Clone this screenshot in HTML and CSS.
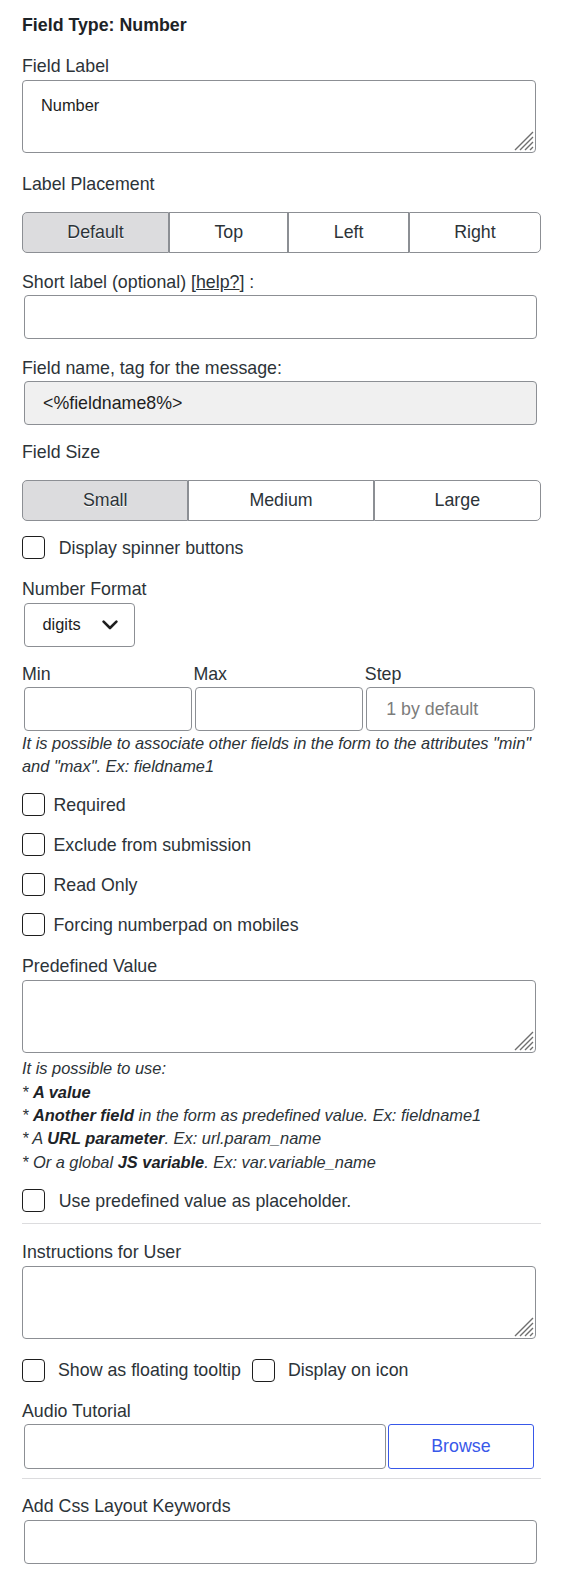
FILE: index.html
```html
<!DOCTYPE html>
<html lang="en">
<head>
<meta charset="utf-8">
<title>Field Type: Number</title>
<link rel="stylesheet" href="styles.css">
</head>
<body>
<div class="panel">
  <h3 class="title">Field Type: Number</h3>

  <div class="field field-first">
    <label class="lbl lbl-area">Field Label</label>
    <div class="area-wrap">
      <textarea class="area">Number</textarea>
      <svg class="grip" width="20" height="20" viewBox="0 0 20 20"><path d="M1 19L19 1M6 19L19 6M11 19L19 11M16 19L19 16" stroke="#6f6f6f" stroke-width="1.4" fill="none"/></svg>
    </div>
  </div>

  <div class="field field-seg1">
    <label class="lbl lbl-seg">Label Placement</label>
    <div class="seg">
      <span class="seg-btn is-active">Default</span>
      <span class="seg-btn">Top</span>
      <span class="seg-btn">Left</span>
      <span class="seg-btn">Right</span>
    </div>
  </div>

  <div class="field">
    <label class="lbl">Short label (optional) [<a class="help">help?</a>] :</label>
    <input class="txt" type="text">
  </div>

  <div class="field">
    <label class="lbl">Field name, tag for the message:</label>
    <input class="txt txt-disabled" type="text" value="<%fieldname8%>" readonly>
  </div>

  <div class="field field-seg2">
    <label class="lbl lbl-seg">Field Size</label>
    <div class="seg">
      <span class="seg-btn is-active">Small</span>
      <span class="seg-btn">Medium</span>
      <span class="seg-btn">Large</span>
    </div>
  </div>

  <label class="check check-spinner"><input class="chk" type="checkbox"><span>Display spinner buttons</span></label>

  <div class="field field-format">
    <label class="lbl">Number Format</label>
    <div class="sel">
      <span>digits</span>
      <svg class="chev" width="16" height="10" viewBox="0 0 16 10"><polyline points="1.6,1.6 8,8 14.4,1.6" fill="none" stroke="#1e1e1e" stroke-width="2.6" stroke-linecap="round" stroke-linejoin="round"/></svg>
    </div>
  </div>

  <div class="field field-range">
    <div class="range">
      <div class="range-col">
        <label class="lbl">Min</label>
        <input class="txt range-input" type="text">
      </div>
      <div class="range-col">
        <label class="lbl">Max</label>
        <input class="txt range-input" type="text">
      </div>
      <div class="range-col">
        <label class="lbl">Step</label>
        <input class="txt range-input" type="text" placeholder="1 by default">
      </div>
    </div>
    <p class="help-text help-range">It is possible to associate other fields in the form to the attributes "min" and "max". Ex: fieldname1</p>
  </div>

  <div class="check-list">
    <label class="check check-tight"><input class="chk" type="checkbox"><span>Required</span></label>
    <label class="check check-tight"><input class="chk" type="checkbox"><span>Exclude from submission</span></label>
    <label class="check check-tight"><input class="chk" type="checkbox"><span>Read Only</span></label>
    <label class="check check-tight"><input class="chk" type="checkbox"><span>Forcing numberpad on mobiles</span></label>
  </div>

  <div class="field field-predef">
    <label class="lbl lbl-area">Predefined Value</label>
    <div class="area-wrap">
      <textarea class="area"></textarea>
      <svg class="grip" width="20" height="20" viewBox="0 0 20 20"><path d="M1 19L19 1M6 19L19 6M11 19L19 11M16 19L19 16" stroke="#6f6f6f" stroke-width="1.4" fill="none"/></svg>
    </div>
    <div class="help-text help-predef">
      <div>It is possible to use:</div>
      <div>* <b>A value</b></div>
      <div>* <b>Another field</b> in the form as predefined value. Ex: fieldname1</div>
      <div>* A <b>URL parameter</b>. Ex: url.param_name</div>
      <div>* Or a global <b>JS variable</b>. Ex: var.variable_name</div>
    </div>
  </div>

  <label class="check check-placeholder"><input class="chk" type="checkbox"><span>Use predefined value as placeholder.</span></label>

  <hr class="divider divider-1">

  <div class="field field-instr">
    <label class="lbl lbl-area">Instructions for User</label>
    <div class="area-wrap">
      <textarea class="area"></textarea>
      <svg class="grip" width="20" height="20" viewBox="0 0 20 20"><path d="M1 19L19 1M6 19L19 6M11 19L19 11M16 19L19 16" stroke="#6f6f6f" stroke-width="1.4" fill="none"/></svg>
    </div>
  </div>

  <div class="check-pair">
    <label class="check"><input class="chk" type="checkbox"><span>Show as floating tooltip</span></label>
    <label class="check"><input class="chk" type="checkbox"><span>Display on icon</span></label>
  </div>

  <div class="field field-audio">
    <label class="lbl">Audio Tutorial</label>
    <div class="file-row">
      <input class="txt file-input" type="text">
      <button class="browse" type="button">Browse</button>
    </div>
  </div>

  <hr class="divider divider-2">

  <div class="field field-css">
    <label class="lbl">Add Css Layout Keywords</label>
    <input class="txt" type="text">
  </div>
</div>
</body>
</html>
```

FILE: styles.css
```css
* {
  box-sizing: border-box;
}

body {
  margin: 0;
  background: #ffffff;
  font-family: "Liberation Sans", Arial, sans-serif;
  font-size: 17.8px;
  color: #2c3338;
}

.panel {
  width: 519px;
  margin-left: 22px;
  padding-top: 14px;
  padding-bottom: 20px;
}

.title {
  margin: 0;
  font-size: 17.8px;
  font-weight: bold;
  line-height: 22px;
  color: #1d2327;
}

.field {
  margin-top: 17.5px;
}

.field-first { margin-top: 18.7px; }
.field-seg1 { margin-top: 20.6px; }
.field-seg2 { margin-top: 16px; }
.field-format { margin-top: 18.7px; }
.field-range { margin-top: 16.3px; }
.field-predef { margin-top: 18.4px; }
.field-instr { margin-top: 16.5px; }
.field-audio { margin-top: 18px; }
.field-css { margin-top: 16.6px; }

.lbl {
  display: block;
  line-height: 22px;
  margin-bottom: 2.4px;
}

.lbl-area {
  margin-bottom: 3.6px;
}

.lbl-seg {
  margin-bottom: 17px;
}

.help {
  color: #2c3338;
  text-decoration: underline;
}

.area-wrap {
  position: relative;
  width: 513.5px;
}

.area {
  display: block;
  width: 513.5px;
  height: 72.4px;
  margin: 0;
  padding: 14px 18px;
  border: 1px solid #8c8f94;
  border-radius: 4px;
  background: #ffffff;
  font-family: "Liberation Sans", Arial, sans-serif;
  font-size: 16.4px;
  line-height: 20px;
  color: #1e1e1e;
  resize: none;
}

.grip {
  position: absolute;
  right: 2px;
  bottom: 2px;
  display: block;
}

.txt {
  display: block;
  width: 512.5px;
  height: 44px;
  margin: 0 0 0 2px;
  padding: 0 18px;
  border: 1px solid #8c8f94;
  border-radius: 4px;
  background: #ffffff;
  font-family: "Liberation Sans", Arial, sans-serif;
  font-size: 17.8px;
  color: #2c3338;
  outline: none;
}

.txt::placeholder {
  color: #7c7c7c;
}

.txt-disabled {
  background: #f0f0f0;
  height: 44.4px;
  color: #1e1e1e;
}

.seg {
  display: flex;
  height: 41px;
}

.seg-btn {
  flex: 1 1 auto;
  display: flex;
  align-items: center;
  justify-content: center;
  border: 1px solid #8c8f94;
  background: #ffffff;
  font-size: 17.8px;
  color: #2c3338;
}

.seg-btn:first-child {
  border-radius: 5px 0 0 5px;
}

.seg-btn:last-child {
  border-radius: 0 5px 5px 0;
}

.seg-btn.is-active {
  background: #dcdcde;
  text-shadow: 0 1px 0 #ffffff;
}

.check {
  display: flex;
  align-items: center;
  gap: 13.7px;
  line-height: 22px;
}

.check-tight {
  gap: 8.5px;
}

.chk {
  appearance: none;
  -webkit-appearance: none;
  flex: none;
  width: 23px;
  height: 23.3px;
  margin: 0;
  border: 1px solid #1e1e1e;
  border-radius: 4px;
  background: #ffffff;
}

.check-spinner { margin-top: 14.7px; }

.check-list {
  display: flex;
  flex-direction: column;
  gap: 16.7px;
  margin-top: 15.3px;
}

.check-placeholder { margin-top: 15.2px; }

.check-pair {
  display: flex;
  gap: 11px;
  margin-top: 20px;
}

.check-pair .check {
  gap: 13px;
}

.sel {
  display: flex;
  align-items: center;
  justify-content: space-between;
  width: 111px;
  height: 44px;
  margin-left: 2px;
  padding: 0 16.5px 0 17.4px;
  border: 1px solid #8c8f94;
  border-radius: 4px;
  font-size: 16.4px;
  color: #1e1e1e;
}

.chev {
  display: block;
}

.range {
  display: grid;
  grid-template-columns: repeat(3, 171.4px);
}

.range-input {
  width: 168.5px;
  margin-left: 1.5px;
  padding: 0 19px;
}

.help-text {
  font-style: italic;
  font-size: 16.4px;
  color: #2c3338;
}

.help-text b {
  color: #1d2327;
}

.help-range {
  margin: 0.7px 0 0;
  line-height: 23px;
}

.help-predef {
  margin-top: 4.7px;
  line-height: 23.3px;
}

.divider {
  height: 0;
  margin: 0;
  border: 0;
  border-top: 1px solid #dcdcde;
}

.divider-1 { margin-top: 10.6px; }
.divider-2 { margin-top: 9px; }

.file-row {
  display: flex;
  gap: 2px;
  margin-left: 2px;
  height: 44.4px;
}

.file-input {
  width: 362.2px;
  height: 44.4px;
  margin: 0;
}

.browse {
  width: 145.4px;
  height: 44.4px;
  border: 1px solid #3858e9;
  border-radius: 3px;
  background: #ffffff;
  color: #3858e9;
  font-family: "Liberation Sans", Arial, sans-serif;
  font-size: 17.8px;
  padding: 0;
}
```
